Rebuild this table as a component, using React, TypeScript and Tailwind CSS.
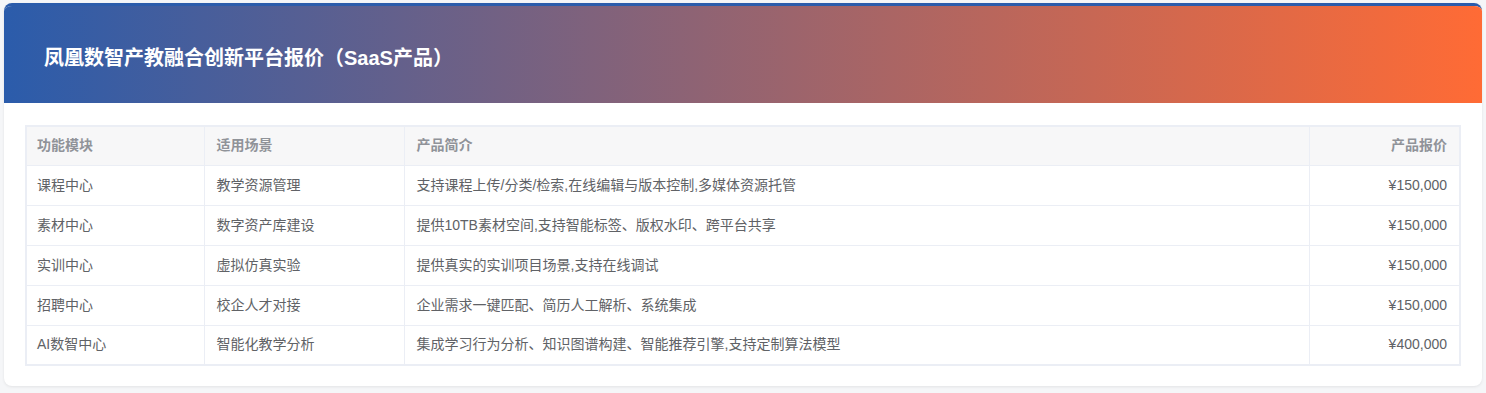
import React from 'react';

interface Row {
  module: string;
  scene: string;
  intro: string;
  price: string;
}

const rows: Row[] = [
  { module: '课程中心', scene: '教学资源管理', intro: '支持课程上传/分类/检索,在线编辑与版本控制,多媒体资源托管', price: '¥150,000' },
  { module: '素材中心', scene: '数字资产库建设', intro: '提供10TB素材空间,支持智能标签、版权水印、跨平台共享', price: '¥150,000' },
  { module: '实训中心', scene: '虚拟仿真实验', intro: '提供真实的实训项目场景,支持在线调试', price: '¥150,000' },
  { module: '招聘中心', scene: '校企人才对接', intro: '企业需求一键匹配、简历人工解析、系统集成', price: '¥150,000' },
  { module: 'AI数智中心', scene: '智能化教学分析', intro: '集成学习行为分析、知识图谱构建、智能推荐引擎,支持定制算法模型', price: '¥400,000' },
];

const App: React.FC = () => {
  return (
    <div
      className="min-h-[393px] bg-[#f5f6f8] pt-[3px] px-1"
      style={{ fontFamily: '"Liberation Sans", "Noto Sans CJK SC", sans-serif' }}
    >
      <div className="bg-white rounded-lg border-t-[3px] border-[#2b5cab] shadow-[0_1px_3px_rgba(0,0,0,0.08)] overflow-hidden">
        <div className="h-[97px] flex items-center px-10 pt-[6px] bg-[linear-gradient(90deg,#2b5cab,#ff6b35)]">
          <h1 className="text-[20px] font-bold text-white">凤凰数智产教融合创新平台报价（SaaS产品）</h1>
        </div>
        <div className="px-[21px] pt-[22px] pb-[20px]">
          <table className="w-full border-collapse border-2 border-[#ebeef5] text-[14px] table-fixed">
            <colgroup>
              <col className="w-[178px]" />
              <col className="w-[200px]" />
              <col />
              <col className="w-[151px]" />
            </colgroup>
            <thead>
              <tr className="bg-[#f7f7f8] h-[39px]">
                <th className="border border-[#ebeef5] pl-[10px] pr-3 text-left font-bold text-[#909399]">功能模块</th>
                <th className="border border-[#ebeef5] pl-3 pr-3 text-left font-bold text-[#909399]">适用场景</th>
                <th className="border border-[#ebeef5] pl-3 pr-3 text-left font-bold text-[#909399]">产品简介</th>
                <th className="border border-[#ebeef5] px-3 text-right font-bold text-[#909399]">产品报价</th>
              </tr>
            </thead>
            <tbody>
              {rows.map((r) => (
                <tr key={r.module} className="h-[40px] text-[#606266]">
                  <td className="border border-[#ebeef5] pl-[10px] pr-3">{r.module}</td>
                  <td className="border border-[#ebeef5] pl-3 pr-3">{r.scene}</td>
                  <td className="border border-[#ebeef5] pl-3 pr-3">{r.intro}</td>
                  <td className="border border-[#ebeef5] px-3 text-right">{r.price}</td>
                </tr>
              ))}
            </tbody>
          </table>
        </div>
      </div>
    </div>
  );
};

export default App;
